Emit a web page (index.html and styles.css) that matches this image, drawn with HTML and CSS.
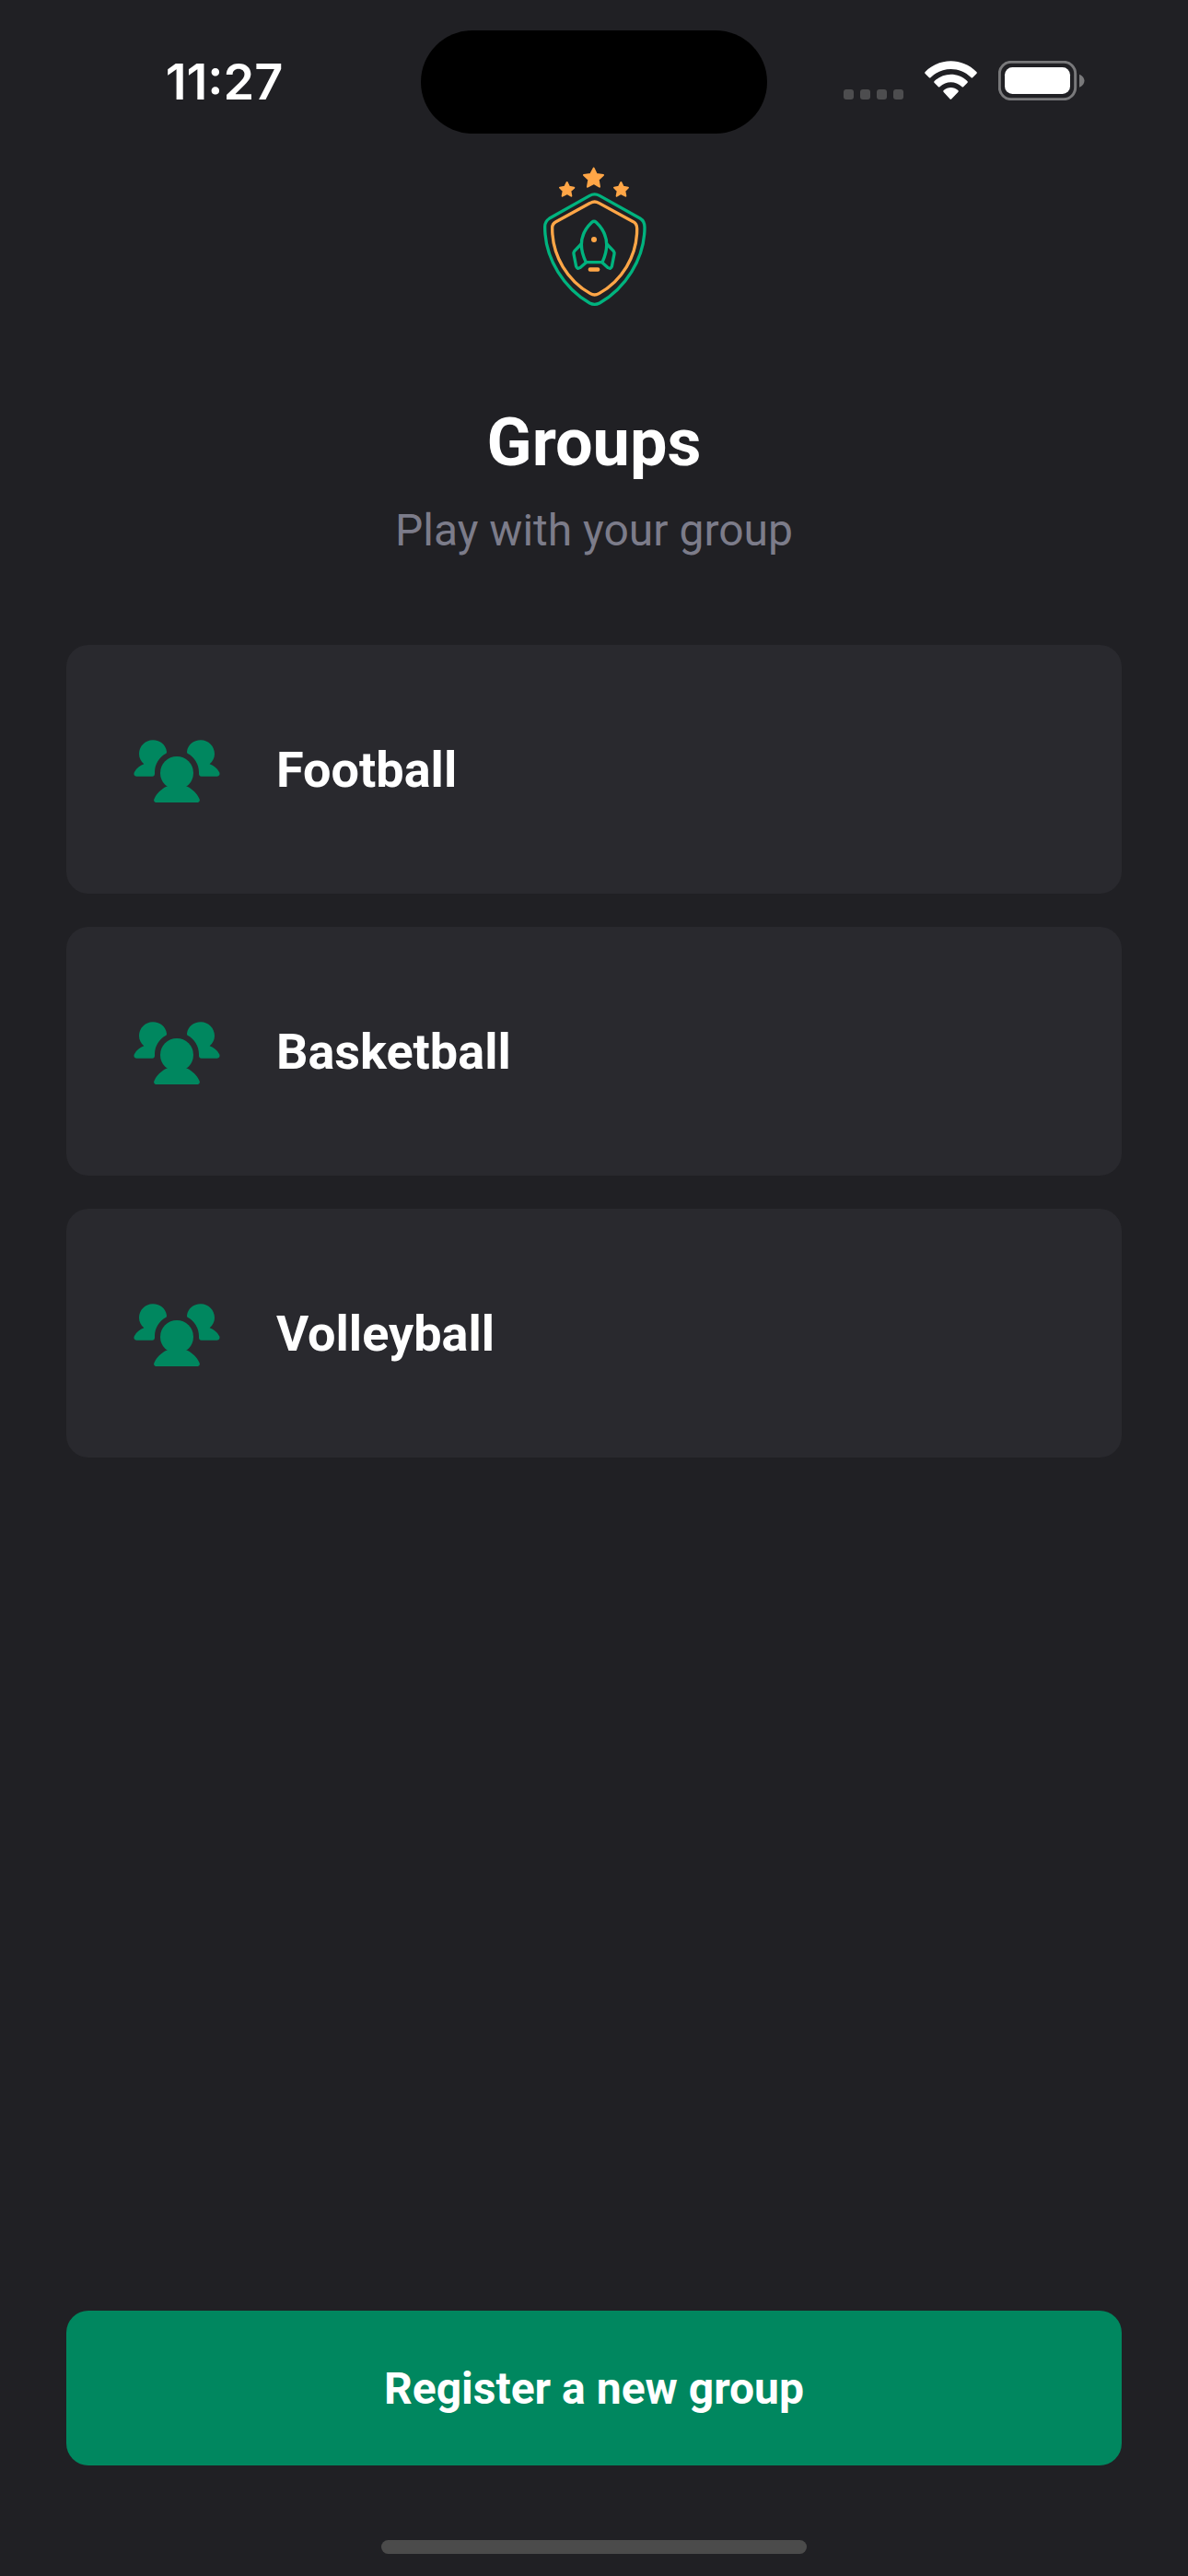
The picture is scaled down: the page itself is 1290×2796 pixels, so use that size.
FILE: index.html
```html
<!DOCTYPE html>
<html lang="en">
<head>
  <meta charset="utf-8">
  <meta name="viewport" content="width=device-width, initial-scale=1">
  <title>Groups</title>
  <link rel="stylesheet" href="styles.css">
</head>
<body>
  <svg class="sprite" aria-hidden="true">
    <symbol id="users" viewBox="0 0 288 288">
      <circle cx="144" cy="156" r="54"/>
      <path d="M110 200 L178 200 C195 208 210 223 217 239 C221 246 217 252 210 252 L78 252 C71 252 67 246 71 239 C78 223 93 208 110 200 Z"/>
      <path id="side" d="M111 86 C108 65 90 49 66 49 C41 49 21 69 21 94 C21 107 27 119 37 127 C23 132 13 141 6 153 C2 160 6 167 13 167 L64 167 C69 167 72 164 72 159 L72 153 C72 128 87 104 108 93 Q112 91 111 86 Z"/>
      <use href="#side" transform="matrix(-1 0 0 1 288 0)"/>
    </symbol>
  </svg>
  <div class="screen">
    <header class="status">
      <time class="clock">11:27</time>
      <div class="island"></div>
      <div class="indicators">
        <svg width="65" height="43" viewBox="0 0 65 43" fill="#4d4d4f" aria-hidden="true">
          <rect y="31" width="11" height="11" rx="3"/>
          <rect x="18" y="31" width="11" height="11" rx="3"/>
          <rect x="36" y="31" width="11" height="11" rx="3"/>
          <rect x="54" y="31" width="11" height="11" rx="3"/>
        </svg>
        <svg width="57" height="43" viewBox="0 0 171 129" fill="#fff" aria-hidden="true">
          <path d="M2 36 C49 -11 122 -11 169 36 Q172 39 169 42 L157 54 Q154 57 151 54 C115 18 56 18 20 54 Q17 57 14 54 L2 42 Q-1 39 2 36 Z"/>
          <path d="M32 66 C62 37 109 37 139 66 Q142 69 139 72 L127 84 Q124 87 121 84 C101 65 70 65 50 84 Q47 87 44 84 L32 72 Q29 69 32 66 Z"/>
          <path d="M62 96 C76 84 95 84 109 96 Q112 99 109 102 L88 124 Q85 127 82 124 L62 102 Q59 99 62 96 Z"/>
        </svg>
        <svg width="94" height="43" viewBox="0 0 282 129" aria-hidden="true">
          <rect x="4" y="4" width="247" height="121" rx="38" fill="none" stroke="#79797b" stroke-width="9"/>
          <rect x="21" y="21" width="213" height="87" rx="25" fill="#fff"/>
          <path d="M264 44 C286 52 286 78 264 86 Z" fill="#79797b"/>
        </svg>
      </div>
    </header>

    <main class="content">
      <svg class="logo" viewBox="51 30 348 462" role="img" aria-label="Rocket shield">
        <g fill="#ffa647" stroke="#ffa647" stroke-width="6" stroke-linejoin="round">
          <path d="M224 38 L233 57 L255 60 L239 75 L243 98 L224 87 L204 98 L208 75 L192 60 L214 57 Z"/>
          <path d="M137 84 L144 98 L160 101 L148 112 L151 128 L137 120 L122 128 L125 112 L114 101 L130 98 Z"/>
          <path d="M313 84 L320 98 L336 101 L325 112 L328 128 L313 120 L299 128 L302 112 L291 101 L306 98 Z"/>
        </g>
        <g fill="none" stroke-width="10" stroke-linecap="round" stroke-linejoin="round">
          <path stroke="#00b37e" d="M211 127 Q227 118 243 127 L375 201 Q390 210 390 230 C390 335 325 430 243 477 Q227 485 211 477 C130 430 65 335 65 230 Q64 212 80 201 Z"/>
          <path stroke="#ffa647" d="M213 151 Q227 143 241 151 L353 212 Q365 219 365 234 C366 325 315 405 241 446 Q227 454 213 446 C140 405 89 325 89 234 Q88 219 101 212 Z"/>
          <path stroke="#00b37e" d="M218 214 Q225 208 232 214 C269 249 276 293 252 344 L199 344 C174 293 181 249 218 214 Z"/>
          <path stroke="#00b37e" d="M183 285 L161 308 Q158 312 159 317 L167 358 Q170 367 179 362 L199 345 M267 285 L289 308 Q292 312 291 317 L283 358 Q280 367 271 362 L252 345"/>
        </g>
        <circle cx="225" cy="270" r="9" fill="#ffa647"/>
        <rect x="206" y="361" width="38" height="13" rx="6" fill="#ffa647"/>
      </svg>

      <h1 class="title">Groups</h1>
      <p class="subtitle">Play with your group</p>

      <div class="groups">
        <button class="card" type="button"><svg class="icon" aria-hidden="true"><use href="#users"/></svg>Football</button>
        <button class="card" type="button"><svg class="icon" aria-hidden="true"><use href="#users"/></svg>Basketball</button>
        <button class="card" type="button"><svg class="icon" aria-hidden="true"><use href="#users"/></svg>Volleyball</button>
      </div>

      <button class="register" type="button">Register a new group</button>
    </main>

    <footer class="home"><div class="home-bar"></div></footer>
  </div>
</body>
</html>
```
FILE: styles.css
```css
* {
  box-sizing: border-box;
}

body {
  margin: 0;
  background: #202024;
  color: #fff;
  font-family: Roboto, "Liberation Sans", sans-serif;
}

button {
  border: 0;
  color: inherit;
  font: inherit;
  cursor: pointer;
}

.sprite {
  display: none;
}

.screen {
  display: flex;
  flex-direction: column;
  min-height: 100vh;
}

.status {
  display: grid;
  grid-template-columns: 1fr auto 1fr;
  align-items: center;
  height: 178px;
}

.clock {
  padding-left: 30px;
  text-align: center;
  font: 600 54px/56px Inter, sans-serif;
}

.island {
  width: 376px;
  height: 112px;
  border-radius: 56px;
  background: #000;
}

.indicators {
  display: flex;
  justify-content: flex-end;
  gap: 23px;
  padding: 0 112px 4px 0;
}

.content {
  flex: 1;
  display: flex;
  flex-direction: column;
  padding: 2px 72px 0;
}

.logo {
  width: 116px;
  height: 154px;
  align-self: center;
}

.title {
  margin: 99px 0 11px;
  text-align: center;
  font-size: 72px;
  line-height: 96px;
  font-weight: 700;
}

.subtitle {
  margin: 0;
  text-align: center;
  font-size: 48px;
  line-height: 72px;
  color: #7c7c8a;
}

.groups {
  display: flex;
  flex-direction: column;
  gap: 36px;
  margin: 88px 0;
}

.card {
  display: flex;
  align-items: center;
  gap: 60px;
  height: 270px;
  padding: 0 72px;
  border-radius: 24px;
  background: #29292e;
  font-size: 54px;
  font-weight: 700;
  text-align: left;
}

.icon {
  width: 96px;
  height: 96px;
  fill: #00875f;
}

.register {
  height: 168px;
  margin-top: auto;
  border-radius: 24px;
  background: #00875f;
  font-size: 48px;
  font-weight: 700;
}

.home {
  display: flex;
  justify-content: center;
  align-items: flex-end;
  height: 120px;
  padding-bottom: 24px;
}

.home-bar {
  width: 462px;
  height: 15px;
  border-radius: 8px;
  background: #4b4b4b;
}
```
